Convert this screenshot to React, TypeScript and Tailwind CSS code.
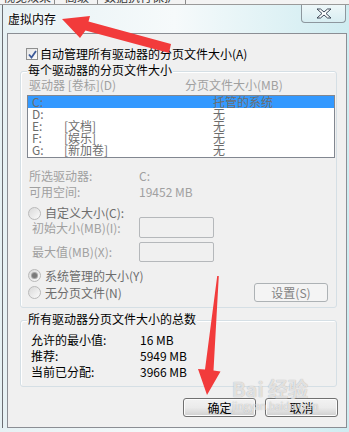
import React from "react";

const drives = [
  { d: "C:", label: "", size: "托管的系统" },
  { d: "D:", label: "", size: "无" },
  { d: "E:", label: "[文档]", size: "无" },
  { d: "F:", label: "[娱乐]", size: "无" },
  { d: "G:", label: "[新加卷]", size: "无" },
];

function Radio({ checked }: { checked?: boolean }) {
  return (
    <span className="flex h-[13px] w-[13px] shrink-0 items-center justify-center rounded-full border border-[#b9b9b9] bg-gradient-to-br from-[#d9d9d9] to-[#fbfbfb]">
      {checked && <span className="h-[5px] w-[5px] rounded-full bg-[#7a7a7a] shadow-[0_0_0_1px_#a6a6a6]" />}
    </span>
  );
}

function WinButton({ children, disabled }: { children: React.ReactNode; disabled?: boolean }) {
  return (
    <div
      className={
        disabled
          ? "flex h-[19px] w-[74px] items-center justify-center rounded-[3px] border border-[#adb2b5] bg-[#f4f4f4] text-[#838383]"
          : "flex h-[19px] w-[73px] items-center justify-center rounded-[3px] border border-[#707070] bg-gradient-to-b from-[#f2f2f2] via-[#ebebeb] to-[#cfcfcf] text-black shadow-[inset_0_0_0_1px_#fcfcfc]"
      }
    >
      {children}
    </div>
  );
}

export default function App() {
  return (
    <div className="relative h-[432px] w-[349px] overflow-hidden bg-gradient-to-r from-[#e6f1f4] via-[#f6fafb] to-[#cfecf1] font-['Noto_Sans_CJK_SC','Noto_Sans',sans-serif] text-[12px] leading-[14px] text-black">
      {/* tabs of the parent dialog peeking out above */}
      <div className="h-[5px] overflow-hidden border-b border-[#9a9a9a] bg-[#f3f3f3]">
        <div className="-mt-[10px] flex text-[#3a3a3a]">
          <span className="w-[55px] border-r border-[#8a8a8a] pl-[3px]">视觉效果</span>
          <span className="w-[43px] border-r border-[#8a8a8a] pl-[10px]">高级</span>
          <span className="w-[88px] border-r border-[#8a8a8a] pl-[6px]">数据执行保护</span>
        </div>
      </div>

      <div className="ml-[2px] border-l border-[#6b6e73] pl-[4px] pr-[2px]">
        {/* title bar */}
        <div className="flex h-[28px] justify-between">
          <div className="pl-[1px] pt-[7px] [text-shadow:0_0_6px_#fff,0_0_3px_#fff]">虚拟内存</div>
          <div className="mr-[1px] flex h-[18px] w-[45px] items-center justify-center rounded-b-[4px] border border-t-0 border-[#8d979e] bg-gradient-to-b from-[#eef7f9] to-[#d8eef2]">
            <svg width="16" height="12" viewBox="0 0 16 12">
              <polygon
                points="1,1 4.5,1 8,4 11.5,1 15,1 10,5.5 15,10 11.5,10 8,7 4.5,10 1,10 6,5.5"
                fill="#ffffff"
                stroke="#3b4656"
                strokeWidth="1"
                strokeLinejoin="round"
              />
            </svg>
          </div>
        </div>

        {/* client area */}
        <div className="h-[395px] border border-[#8b8e94] bg-[#f0f0f0]">
          <div className="mt-[13px] flex h-[14px] items-center gap-[2px] pl-[18px]">
            <span className="flex h-[12px] w-[12px] items-center justify-center border border-[#8e8f8f] bg-gradient-to-br from-[#e4e4e4] to-[#fdfdfd]">
              <svg width="9" height="9" viewBox="0 0 9 9">
                <path d="M1 4.5 L3.5 7.5 L8 1" fill="none" stroke="#3d5a99" strokeWidth="1.8" />
              </svg>
            </span>
            <span>自动管理所有驱动器的分页文件大小(A)</span>
          </div>

          {/* per-drive group */}
          <div className="ml-[12px] mt-[10px] h-[237px] w-[317px] rounded-[3px] border border-[#d5dfe5] shadow-[inset_1px_1px_0_#fff]">
            <div className="-mt-[9px] ml-[6px] w-fit bg-[#f0f0f0] px-[1px]">每个驱动器的分页文件大小</div>
            <div className="mt-[1px] flex h-[14px] pl-[8px] text-[#a0a0a0]">
              <span className="w-[156px]">驱动器 [卷标](D)</span>
              <span>分页文件大小(MB)</span>
            </div>
            <div className="ml-[6px] mt-[3px] h-[63px] w-[308px] border border-[#828790] bg-white">
              {drives.map((r, i) => (
                <div
                  key={r.d}
                  className={`flex h-[12px] pl-[4px] leading-[12px] text-[#6d6d6d] ${i === 0 ? "bg-[#3399ff]" : ""}`}
                >
                  <span className="w-[32px]">{r.d}</span>
                  <span className="w-[149px]">{r.label}</span>
                  <span>{r.size}</span>
                </div>
              ))}
            </div>

            <div className="mt-[11px] flex h-[14px] pl-[8px] text-[#a0a0a0]">
              <span className="w-[110px]">所选驱动器:</span>
              <span>C:</span>
            </div>
            <div className="mt-[2px] flex h-[14px] pl-[8px] text-[#a0a0a0]">
              <span className="w-[110px]">可用空间:</span>
              <span>19452 MB</span>
            </div>

            <div className="mt-[8px] flex h-[12px] items-center gap-[4px] pl-[7px] text-[#6d6d6d]">
              <Radio />
              <span>自定义大小(C):</span>
            </div>
            <div className="-mt-[2px] flex h-[21px] items-center pl-[11px] text-[#a0a0a0]">
              <span className="w-[107px]">初始大小(MB)(I):</span>
              <span className="h-[21px] w-[75px] rounded-[2px] border border-[#b5b8bb] bg-[#f0f0f0]" />
            </div>
            <div className="mt-[4px] flex h-[20px] items-center pl-[11px] text-[#a0a0a0]">
              <span className="w-[107px]">最大值(MB)(X):</span>
              <span className="h-[20px] w-[75px] rounded-[2px] border border-[#b5b8bb] bg-[#f0f0f0]" />
            </div>

            <div className="mt-[7px] flex h-[13px] items-center gap-[4px] pl-[7px] text-[#6d6d6d]">
              <Radio checked />
              <span>系统管理的大小(Y)</span>
            </div>
            <div className="mt-[1px] flex h-[19px] items-center justify-between pl-[7px] pr-[8px] text-[#6d6d6d]">
              <div className="flex items-center gap-[4px]">
                <Radio />
                <span>无分页文件(N)</span>
              </div>
              <WinButton disabled>设置(S)</WinButton>
            </div>
          </div>

          {/* totals group */}
          <div className="ml-[12px] mt-[12px] h-[67px] w-[317px] rounded-[3px] border border-[#d5dfe5] shadow-[inset_1px_1px_0_#fff]">
            <div className="-mt-[9px] ml-[6px] w-fit bg-[#f0f0f0] px-[1px]">所有驱动器分页文件大小的总数</div>
            <div className="mt-[7px] flex h-[14px] pl-[10px]">
              <span className="w-[109px]">允许的最小值:</span>
              <span>16 MB</span>
            </div>
            <div className="mt-[2px] flex h-[14px] pl-[10px]">
              <span className="w-[109px]">推荐:</span>
              <span>5949 MB</span>
            </div>
            <div className="mt-[2px] flex h-[14px] pl-[10px]">
              <span className="w-[109px]">当前已分配:</span>
              <span>3966 MB</span>
            </div>
          </div>

          <div className="mt-[11px] flex justify-end gap-[9px] pr-[8px]">
            <WinButton>确定</WinButton>
            <WinButton>取消</WinButton>
          </div>
        </div>
      </div>

      {/* watermark */}
      <div className="pointer-events-none absolute left-[232px] top-[378px] text-white/70 [text-shadow:0_0_1px_#9a9a9a]">
        <div className="text-[20px] font-bold leading-[22px]">Bai 经验</div>
        <div className="text-[10px] leading-[11px]">jingyan.baidu.com</div>
      </div>

      {/* red annotation arrows */}
      <svg className="pointer-events-none absolute left-0 top-0" width="349" height="432" viewBox="0 0 349 432">
        <polygon
          points="62,19 90,16 88.5,21.5 171,44 169,53 85.5,30.5 80,38"
          fill="#f23b3b"
        />
        <polygon
          points="207,395 198,369 205,369.5 217.2,276 218.8,276 213.5,370.5 220.5,371.5"
          fill="#f23b3b"
        />
      </svg>
    </div>
  );
}
